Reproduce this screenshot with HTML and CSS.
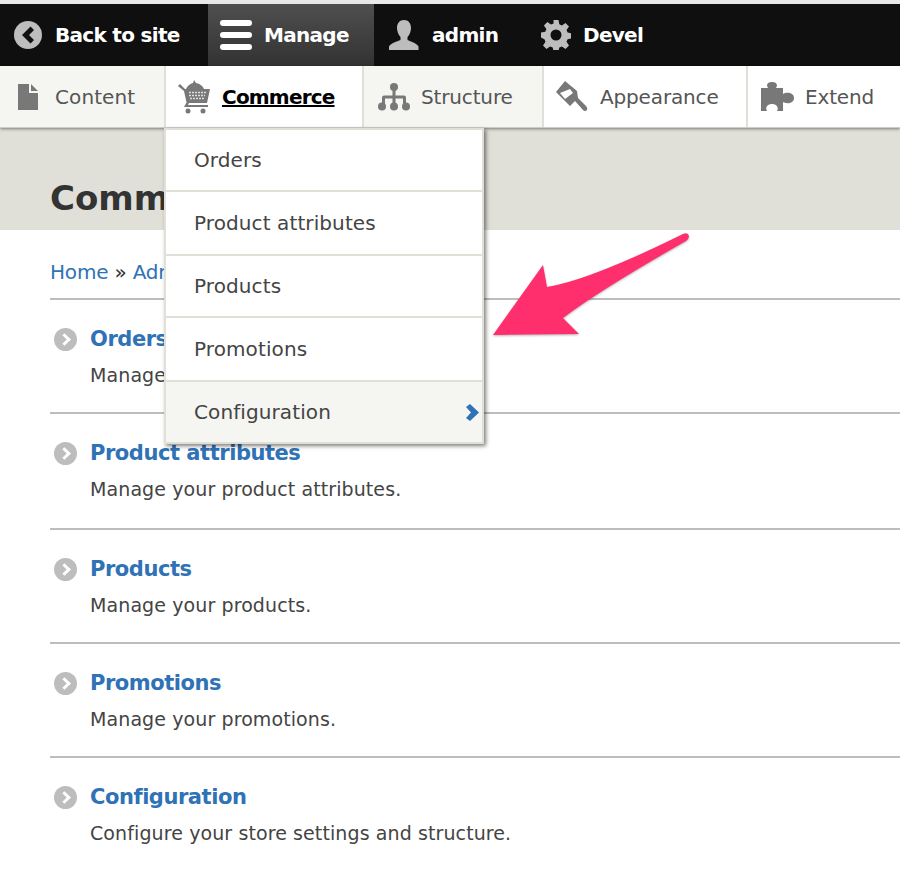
FILE: index.html
```html
<!DOCTYPE html>
<html lang="en">
<head>
    <meta charset="UTF-8">
    <meta name="viewport" content="width=device-width, initial-scale=1.0">
    <title>Commerce</title>
    <link rel="stylesheet" href="styles.css">
</head>
<body>
    <nav class="toolbar">
        <a class="bar-item back">
            <svg class="bar-icon" viewBox="0 0 28 28"><circle cx="14" cy="14" r="14" fill="#bdbdbd"/><path d="M16.500 5.500l3.500 3.500-5 5 5 5-3.500 3.500-8.500-8.500z" fill="#111"/></svg>
            Back to site
        </a>
        <a class="bar-item manage">
            <svg class="bar-icon" viewBox="0 0 32 30"><g fill="#fff"><rect width="32" height="6" rx="3"/><rect y="12" width="32" height="6" rx="3"/><rect y="24" width="32" height="6" rx="3"/></g></svg>
            Manage
        </a>
        <a class="bar-item admin">
            <svg class="bar-icon" viewBox="0 0 30 30"><path d="M15 0c4.500 0 7 3.500 7 8 0 3.500-1.500 7-3.500 9v3c3 1.500 9 3 11 6.500V30H0v-3.500C2 23 8 21.500 11.500 20v-3C9.500 15 8 11.500 8 8c0-4.500 2.500-8 7-8z" fill="#bdbdbd"/></svg>
            admin
        </a>
        <a class="bar-item devel">
            <svg class="bar-icon" viewBox="0 0 30 30"><path fill-rule="evenodd" d="M12.500 0h5l.8 4.300 2.600 1.100 3.600-2.500 3.500 3.500-2.500 3.600 1.100 2.600 4.300.8v5l-4.300.8-1.100 2.600 2.500 3.600-3.500 3.500-3.600-2.500-2.600 1.100-.8 3.600h-5l-.8-3.600-2.600-1.100-3.600 2.500-3.500-3.500 2.500-3.600-1.100-2.600L0 17.500v-5l4.300-.8 1.100-2.600-2.500-3.600 3.500-3.500 3.600 2.500 2.600-1.100zM15 9.500a5.500 5.500 0 1 0 0 11 5.500 5.500 0 0 0 0-11z" fill="#bdbdbd"/></svg>
            Devel
        </a>
    </nav>

    <nav class="tray">
        <a class="tray-item content-link">
            <svg class="tray-icon" viewBox="0 0 20 26"><path d="M0 0h11v9h9v17H0zM13 0l7 7h-7z" fill="#787878"/></svg>
            Content
        </a>
        <a class="tray-item commerce-link">
            <svg class="tray-icon" viewBox="0 0 32 34"><g fill="#787878"><path d="M16 0l2 3c4 .7 7 3 8 6H8c1-3 4-5.300 7-6z"/><path d="M0 6l2-2 5 5h25l-3 14H11l-1 2h20v2H6l2.500-4.500L6 11z"/><circle cx="10" cy="31" r="2.500"/><circle cx="25" cy="31" r="2.500"/></g><path d="M11 12.500h17M11 15.500h16M12 18.500h14" stroke="#fff" stroke-width="1.500" stroke-dasharray="2 1" opacity=".75"/></svg>
            <span>Commerce</span>
        </a>
        <a class="tray-item structure-link">
            <svg class="tray-icon" viewBox="0 0 32 28"><g fill="#787878"><circle cx="16" cy="4" r="4"/><rect x="14.500" y="6" width="3" height="16"/><path d="M4 21v-6.500a2 2 0 0 1 2-2h20a2 2 0 0 1 2 2V21h-3v-5.500H7V21z"/><circle cx="4" cy="23.500" r="4"/><circle cx="16" cy="23.500" r="4"/><circle cx="28" cy="23.500" r="4"/></g></svg>
            Structure
        </a>
        <a class="tray-item appearance-link">
            <svg class="tray-icon" viewBox="0 0 32 31"><path fill-rule="evenodd" d="M9 0L0 11L14 25L19 20L27 29Q29 31 31 29Q32 27 30 25L22 17L21 10ZM4 12L14 8L17 12L9 18Z" fill="#787878"/></svg>
            Appearance
        </a>
        <a class="tray-item extend-link">
            <svg class="tray-icon" viewBox="0 0 33 29"><path d="M0 6H7C5 3 6 0 11 0S17 3 15 6H22V12C25 10 33 10 33 16S25 22 22 20V29H16C18 26 16 22 11 22S4 26 6 29H0Z" fill="#787878"/></svg>
            Extend
        </a>
    </nav>

    <header class="page-header">
        <h1>Commerce</h1>
    </header>

    <main class="page-content">
        <div class="breadcrumb"><a>Home</a> » <a>Administration</a></div>
        <ul class="admin-list">
            <li>
                <a class="admin-title">Orders</a>
                <p>Manage your orders.</p>
            </li>
            <li>
                <a class="admin-title">Product attributes</a>
                <p>Manage your product attributes.</p>
            </li>
            <li>
                <a class="admin-title">Products</a>
                <p>Manage your products.</p>
            </li>
            <li>
                <a class="admin-title">Promotions</a>
                <p>Manage your promotions.</p>
            </li>
            <li>
                <a class="admin-title">Configuration</a>
                <p>Configure your store settings and structure.</p>
            </li>
        </ul>
    </main>

    <ul class="dropdown">
        <li>Orders</li>
        <li class="tall">Product attributes</li>
        <li>Products</li>
        <li class="tall">Promotions</li>
        <li class="has-children">
            Configuration
            <svg class="chevron" viewBox="0 0 13 17"><path d="M4 0l9 8.500L4 17l-4-3 5-5.500L0 3z" fill="#2f72b5"/></svg>
        </li>
    </ul>

    <svg class="arrow" viewBox="0 0 900 896"><path d="M493 335L543 265L547 287Q590 280 683 234Q688 232 689 236Q689 239 686 241Q600 290 563 318L579 334Z" fill="#ff2f6e"/></svg>
</body>
</html>
```

FILE: styles.css
```css
body {
    font-family: "DejaVu Sans", sans-serif;
    margin: 0;
    padding: 0;
    background: #fff;
    color: #444;
}
.toolbar {
    display: flex;
    height: 62px;
    background: #0f0f0f;
    border-top: 4px solid #e8e8e8;
}
.bar-item {
    display: flex;
    align-items: center;
    color: #fff;
    font-size: 20px;
    font-weight: bold;
    letter-spacing: -0.7px;
}
.bar-icon {
    flex: none;
}
.back {
    width: 194px;
    padding-left: 14px;
    gap: 13px;
}
.back .bar-icon {
    width: 28px;
    height: 28px;
}
.manage {
    width: 146px;
    padding-left: 12px;
    padding-right: 8px;
    gap: 12px;
    background: linear-gradient(#4f4f4f, #323232);
}
.manage .bar-icon {
    width: 32px;
    height: 30px;
}
.admin {
    width: 150px;
    padding-left: 15px;
    gap: 13px;
}
.admin .bar-icon {
    width: 30px;
    height: 30px;
}
.devel {
    padding-left: 2px;
    gap: 12px;
}
.devel .bar-icon {
    width: 30px;
    height: 30px;
}
.tray {
    display: flex;
    position: relative;
    height: 61px;
    border-bottom: 1px solid #ccc;
    box-shadow: 0 1px 3px rgba(0,0,0,0.45);
    background: #fff;
}
.tray-item {
    display: flex;
    align-items: center;
    box-sizing: border-box;
    height: 61px;
    font-size: 20px;
    letter-spacing: -0.15px;
    color: #555;
    border-right: 2px solid #e0e0d8;
}
.tray-icon {
    flex: none;
}
.content-link {
    width: 166px;
    padding-left: 18px;
    gap: 17px;
    background: #f5f5f2;
    letter-spacing: 0.1px;
}
.content-link .tray-icon {
    width: 20px;
    height: 26px;
}
.commerce-link {
    width: 198px;
    padding-left: 12px;
    gap: 12px;
    color: #000;
    font-weight: bold;
    letter-spacing: -0.8px;
}
.commerce-link span {
    text-decoration: underline;
}
.commerce-link .tray-icon {
    width: 32px;
    height: 34px;
}
.structure-link {
    width: 180px;
    padding-left: 14px;
    gap: 11px;
    background: #f5f5f2;
}
.structure-link .tray-icon {
    width: 32px;
    height: 28px;
}
.appearance-link {
    width: 204px;
    padding-left: 12px;
    gap: 12px;
}
.appearance-link .tray-icon {
    width: 32px;
    height: 31px;
}
.extend-link {
    flex: 1;
    padding-left: 13px;
    gap: 11px;
    border-right: none;
}
.extend-link .tray-icon {
    width: 33px;
    height: 29px;
}
.page-header {
    height: 102px;
    box-sizing: border-box;
    padding: 48px 50px 0;
    background: #e0e0d8;
}
h1 {
    margin: 0;
    font-size: 34px;
    line-height: 44px;
    color: #333;
    font-weight: bold;
}
.page-content {
    padding: 28px 0 0 50px;
}
.breadcrumb {
    font-size: 20px;
    line-height: 28px;
    letter-spacing: -0.2px;
    color: #333;
    padding-bottom: 12px;
}
.breadcrumb a {
    color: #2f72b5;
}
.admin-list {
    list-style: none;
    margin: 0;
    padding: 0;
}
.admin-list li {
    height: 112px;
    padding-left: 40px;
    border-top: 2px solid #bdbdbd;
    position: relative;
}
.admin-list li:nth-child(2) {
    height: 114px;
}
.admin-list li::before {
    content: "";
    position: absolute;
    left: 4px;
    top: 28px;
    width: 23px;
    height: 23px;
    border-radius: 50%;
    background: #bdbdbd;
}
.admin-list li::after {
    content: "";
    position: absolute;
    left: 10px;
    top: 35px;
    width: 6px;
    height: 6px;
    border-top: 3px solid #fff;
    border-right: 3px solid #fff;
    transform: rotate(45deg);
}
.admin-title {
    display: block;
    padding-top: 25px;
    font-size: 21px;
    line-height: 28px;
    font-weight: bold;
    letter-spacing: -0.45px;
    color: #2f72b5;
}
.admin-list p {
    margin: 10px 0 0;
    font-size: 19px;
    line-height: 24px;
    letter-spacing: 0.1px;
    color: #444;
}
.dropdown {
    position: absolute;
    left: 164px;
    top: 128px;
    width: 316px;
    margin: 0;
    padding: 0;
    list-style: none;
    background: #fff;
    border: 2px solid #e0e0d8;
    box-shadow: 2px 2px 4px rgba(0,0,0,0.5);
    font-size: 20px;
    letter-spacing: 0.1px;
    color: #444;
}
.dropdown li {
    display: flex;
    align-items: center;
    justify-content: space-between;
    box-sizing: border-box;
    height: 62px;
    padding: 0 3px 0 28px;
    border-bottom: 2px solid #e0e0d8;
}
.dropdown li.tall {
    height: 64px;
}
.dropdown li:last-child {
    height: 60px;
    border-bottom: none;
    background: #f5f5f2;
}
.chevron {
    width: 13px;
    height: 17px;
}
.arrow {
    position: absolute;
    left: 0;
    top: 0;
    width: 900px;
    height: 896px;
    filter: drop-shadow(0 1px 1px rgba(0,0,0,0.3));
    pointer-events: none;
}
```
